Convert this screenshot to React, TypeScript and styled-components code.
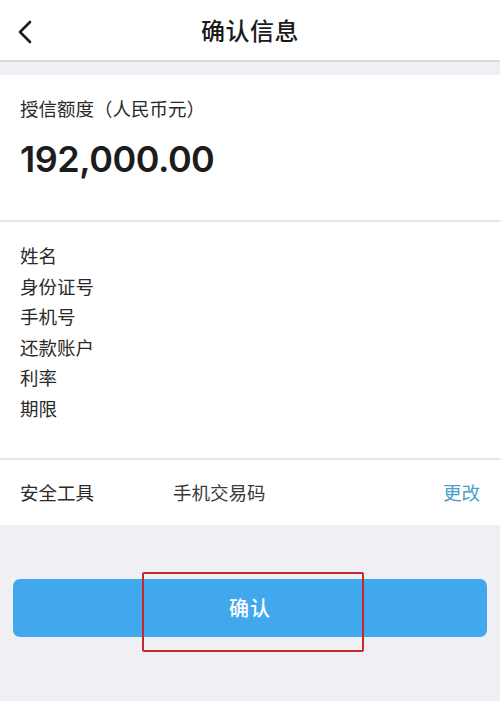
import { createGlobalStyle, styled } from 'styled-components';

const GlobalStyle = createGlobalStyle`
  html, body {
    margin: 0;
    padding: 0;
    background-color: #efeff4;
  }

  body {
    font-family: 'Noto Sans CJK SC', 'Noto Sans', sans-serif;
    color: #222222;
  }
`;

const infoLabels = ['姓名', '身份证号', '手机号', '还款账户', '利率', '期限'];

const App = () => {
  return (
    <>
      <GlobalStyle />
      <Page>
        <Header>
          <BackButton aria-label="返回">
            <svg width="16" height="24" viewBox="0 0 16 24" fill="none">
              <path d="M13 2 L3 12 L13 22" stroke="#1a1a1a" strokeWidth="2.6" strokeLinecap="round" strokeLinejoin="round" />
            </svg>
          </BackButton>
          <Title>确认信息</Title>
        </Header>

        <Card>
          <AmountSection>
            <AmountLabel>授信额度（人民币元）</AmountLabel>
            <Amount>192,000.00</Amount>
          </AmountSection>

          <InfoList>
            {infoLabels.map((label) => (
              <InfoItem key={label}>{label}</InfoItem>
            ))}
          </InfoList>

          <SecurityRow>
            <SecurityLabel>安全工具</SecurityLabel>
            <SecurityValue>手机交易码</SecurityValue>
            <ChangeLink>更改</ChangeLink>
          </SecurityRow>
        </Card>

        <Footer>
          <ButtonWrapper>
            <ConfirmButton>确认</ConfirmButton>
            {/* 截图上的红色标注框 */}
            <Highlight />
          </ButtonWrapper>
        </Footer>
      </Page>
    </>
  );
};

const Page = styled.div`
  display: flex;
  flex-direction: column;

  width: 500px;
  min-height: 701px;

  background-color: #efeff4;
`;

const Header = styled.header`
  display: flex;
  align-items: center;
  justify-content: center;

  height: 60px;
  position: relative;

  background-color: #ffffff;
  border-bottom: 2px solid #d9d9dc;
`;

const BackButton = styled.button`
  display: flex;
  align-items: center;

  position: absolute;
  left: 17px;
  top: 20px;

  padding: 0;
  border: 0;
  background: none;
`;

const Title = styled.h1`
  margin: 0;

  font-size: 24px;
  font-weight: 500;
  line-height: 32px;
  letter-spacing: 0.5px;
  color: #1a1a1a;
`;

const Card = styled.section`
  display: flex;
  flex-direction: column;

  margin-top: 13px;

  background-color: #ffffff;
`;

const AmountSection = styled.div`
  display: flex;
  flex-direction: column;
  gap: 16px;

  padding: 21px 20px 38px;

  border-bottom: 2px solid #e6e6e8;
`;

const AmountLabel = styled.div`
  font-size: 18.5px;
  line-height: 24px;
  color: #2a2a2a;
`;

const Amount = styled.div`
  font-family: Inter, 'Liberation Sans', sans-serif;
  font-size: 36px;
  font-weight: 600;
  line-height: 46px;
  letter-spacing: -0.5px;
  color: #1c1c1c;
`;

const InfoList = styled.ul`
  display: flex;
  flex-direction: column;

  margin: 0;
  padding: 18px 20px 34px;

  list-style: none;

  border-bottom: 2px solid #e6e6e8;
`;

const InfoItem = styled.li`
  font-size: 18.5px;
  line-height: 30.6px;
  color: #2a2a2a;
`;

const SecurityRow = styled.div`
  display: grid;
  grid-template-columns: 153px 1fr auto;
  align-items: center;

  height: 65px;
  padding: 0 20px;

  font-size: 18.5px;
  line-height: 24px;
`;

const SecurityLabel = styled.span`
  color: #2a2a2a;
`;

const SecurityValue = styled.span`
  color: #3a3a3a;
`;

const ChangeLink = styled.a`
  color: #4a9fcd;
  cursor: pointer;
`;

const Footer = styled.div`
  padding: 54px 13px 0;
`;

const ButtonWrapper = styled.div`
  position: relative;
`;

const ConfirmButton = styled.button`
  display: flex;
  align-items: center;
  justify-content: center;

  width: 100%;
  height: 58px;

  border: 0;
  border-radius: 7px;
  background-color: #41a8ee;

  font-family: 'Noto Sans CJK SC', sans-serif;
  font-size: 20px;
  font-weight: 500;
  color: #ffffff;
  letter-spacing: 1px;
`;

const Highlight = styled.div`
  position: absolute;
  left: 129px;
  top: -7px;

  width: 218px;
  height: 76px;

  border: 2px solid #c8282d;
  border-radius: 2px;

  pointer-events: none;
`;

export default App;
